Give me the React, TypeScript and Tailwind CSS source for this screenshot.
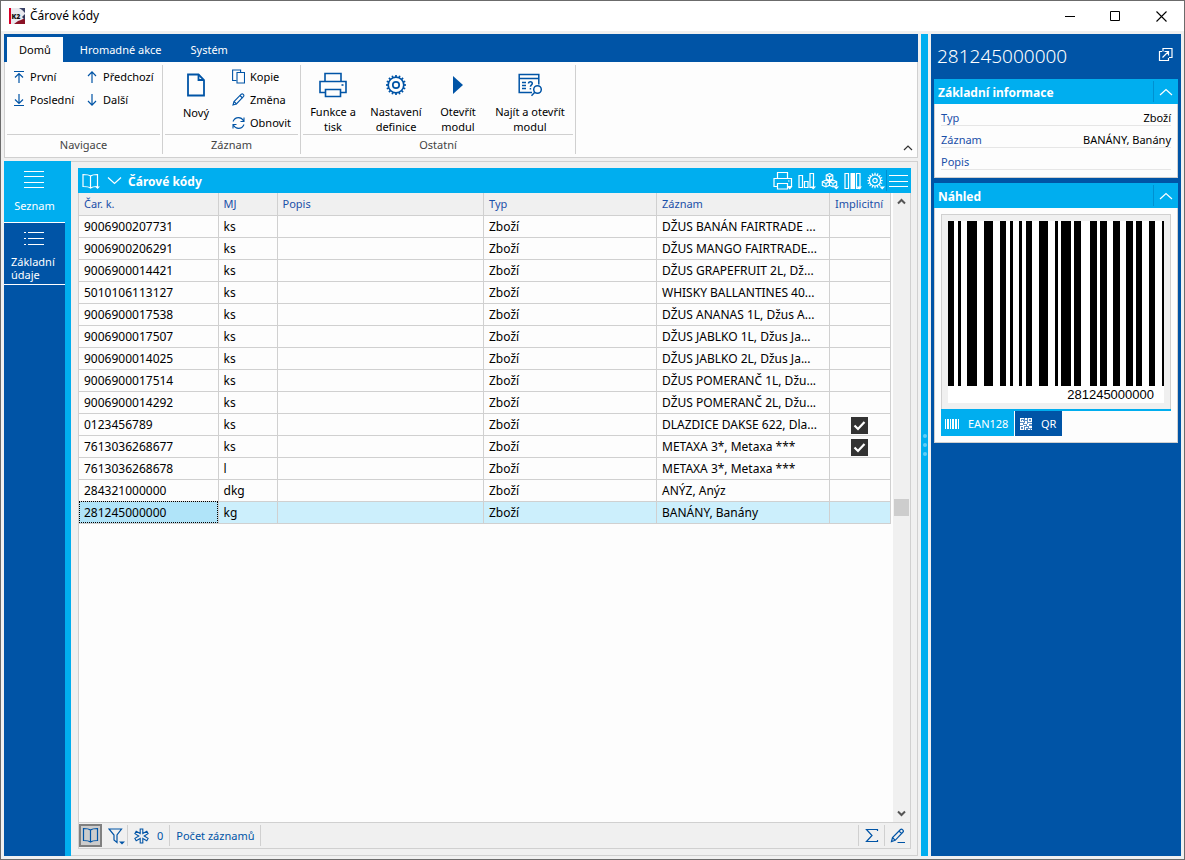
import React from "react";

const rows = [
	{ code: "9006900207731", unit: "ks", record: "DŽUS BANÁN FAIRTRADE ...", implicit: false },
	{ code: "9006900206291", unit: "ks", record: "DŽUS MANGO FAIRTRADE...", implicit: false },
	{ code: "9006900014421", unit: "ks", record: "DŽUS GRAPEFRUIT 2L, Dž...", implicit: false },
	{ code: "5010106113127", unit: "ks", record: "WHISKY BALLANTINES 40...", implicit: false },
	{ code: "9006900017538", unit: "ks", record: "DŽUS ANANAS 1L, Džus A...", implicit: false },
	{ code: "9006900017507", unit: "ks", record: "DŽUS JABLKO 1L, Džus Ja...", implicit: false },
	{ code: "9006900014025", unit: "ks", record: "DŽUS JABLKO 2L, Džus Ja...", implicit: false },
	{ code: "9006900017514", unit: "ks", record: "DŽUS POMERANČ 1L, Džu...", implicit: false },
	{ code: "9006900014292", unit: "ks", record: "DŽUS POMERANČ 2L, Džu...", implicit: false },
	{ code: "0123456789", unit: "ks", record: "DLAZDICE DAKSE 622, Dla...", implicit: true },
	{ code: "7613036268677", unit: "ks", record: "METAXA 3*, Metaxa ***", implicit: true },
	{ code: "7613036268678", unit: "l", record: "METAXA 3*, Metaxa ***", implicit: false },
	{ code: "284321000000", unit: "dkg", record: "ANÝZ, Anýz", implicit: false },
	{ code: "281245000000", unit: "kg", record: "BANÁNY, Banány", implicit: false },
];

const columns = ["Čar. k.", "MJ", "Popis", "Typ", "Záznam", "Implicitní"];

// [x, width] of every black bar
const bars = [
	[0, 6], [10, 3], [19, 10], [36, 9], [52, 6], [62, 3], [71, 3], [78, 6], [91, 9], [107, 3],
	[113, 10], [126, 7], [142, 7], [152, 7], [165, 7], [178, 7], [188, 6], [201, 6], [214, 2],
];

type IconProps = {
	w: number;
	h: number;
	className?: string;
	sw?: number;
	children: React.ReactNode;
};

function Icon({ w, h, className = "", sw = 1.2, children }: IconProps) {
	return (
		<svg
			width={w}
			height={h}
			viewBox={`0 0 ${w} ${h}`}
			fill="none"
			stroke="currentColor"
			strokeWidth={sw}
			className={`shrink-0 ${className}`}
			aria-hidden="true"
		>
			{children}
		</svg>
	);
}

function GearShape({ cx, cy, r, inner }: { cx: number; cy: number; r: number; inner: number }) {
	return (
		<>
			<circle cx={cx} cy={cy} r={r} />
			<circle cx={cx} cy={cy} r={inner} />
			{Array.from({ length: 16 }, (_, i) => {
				const a = (i * Math.PI) / 8;
				return (
					<line
						key={i}
						x1={cx + Math.cos(a) * r}
						y1={cy + Math.sin(a) * r}
						x2={cx + Math.cos(a) * (r + 2.2)}
						y2={cy + Math.sin(a) * (r + 2.2)}
					/>
				);
			})}
		</>
	);
}

function SmallButton({ label, icon }: { label: string; icon: React.ReactNode }) {
	return (
		<button type="button" className="flex h-[23px] items-center gap-[5px] text-left">
			{icon}
			<span className="pt-[2px]">{label}</span>
		</button>
	);
}

function BigButton({ icon, lines, className }: { icon: React.ReactNode; lines: string[]; className: string }) {
	return (
		<button type="button" className={`flex shrink-0 flex-col items-center leading-[15px] whitespace-nowrap ${className}`}>
			<span className="flex h-10 items-center text-[#0054a6]">{icon}</span>
			{lines.map((line) => (
				<span key={line}>{line}</span>
			))}
		</button>
	);
}

function RibbonGroup({ title, children }: { title: string; children: React.ReactNode }) {
	return (
		<div className="my-[3px] flex flex-col border-r border-[#d0d0d0] px-[2px]">
			<div className="flex h-[70px] border-b border-[#d0d0d0]">{children}</div>
			<p className="flex flex-1 items-center justify-center pt-[2px] text-[#444444]">{title}</p>
		</div>
	);
}

function Ribbon() {
	return (
		<div>
			<nav className="flex h-7 items-end gap-[5px] bg-[#0054a6] pl-[3px] text-white">
				<button type="button" className="h-[25px] bg-[#fdfdfd] px-3 pt-[2px] text-black">Domů</button>
				<button type="button" className="h-[25px] px-3 pt-[2px]">Hromadné akce</button>
				<button type="button" className="h-[25px] px-3 pt-[2px]">Systém</button>
			</nav>
			<div className="flex h-24 items-stretch border border-t-0 border-[#d0d0d0] bg-[#fdfdfd]">
				<RibbonGroup title="Navigace">
					<div className="flex w-[153px] pl-[6px]">
						<div className="w-[73px]">
							<SmallButton
								label="První"
								icon={
									<Icon w={12} h={14} className="text-[#0054a6]">
										<path d="M1 1.5h10M6 13V4M2 7.5l4-4 4 4" />
									</Icon>
								}
							/>
							<SmallButton
								label="Poslední"
								icon={
									<Icon w={12} h={14} className="text-[#0054a6]">
										<path d="M1 12.5h10M6 1v9M2 6.5l4 4 4-4" />
									</Icon>
								}
							/>
						</div>
						<div>
							<SmallButton
								label="Předchozí"
								icon={
									<Icon w={12} h={14} className="text-[#0054a6]">
										<path d="M6 13V2M2 6l4-4.2L10 6" />
									</Icon>
								}
							/>
							<SmallButton
								label="Další"
								icon={
									<Icon w={12} h={14} className="text-[#0054a6]">
										<path d="M6 1v11M2 8l4 4.2L10 8" />
									</Icon>
								}
							/>
						</div>
					</div>
				</RibbonGroup>
				<RibbonGroup title="Záznam">
					<div className="flex w-[133px] gap-[5px]">
						<BigButton
							className="w-[62px]"
							lines={["Nový"]}
							icon={
								<Icon w={18} h={24} sw={1.8}>
									<path d="M1 1.5h10.5L17 7v15.5H1z" />
									<path d="M11.5 1.5V7H17" />
								</Icon>
							}
						/>
						<div>
							<SmallButton
								label="Kopie"
								icon={
									<Icon w={13} h={15} sw={1.1} className="text-[#0054a6]">
										<path d="M5 3.5h7.5v10.5H5z" />
										<path d="M4.500 11.500H.6V1h8v2.500" />
									</Icon>
								}
							/>
							<SmallButton
								label="Změna"
								icon={
									<Icon w={13} h={13} sw={1.1} className="text-[#0054a6]">
										<path d="M1 12l1-3.500L9.300 1.200q1-.8 2 .2t.3 2L4.400 11z" />
										<path d="M8 2.500l2.500 2.500M2 8.500L4.500 11" />
									</Icon>
								}
							/>
							<SmallButton
								label="Obnovit"
								icon={
									<Icon w={13} h={14} sw={1.1} className="text-[#0054a6]">
										<path d="M1 5.500C2 3 4 1.600 6.500 1.600S10.500 3 11.500 4.800M12 1.500v4H8.500" />
										<path d="M12 8.500c-1 2.500-3 3.900-5.500 3.900S2.500 11 1.500 9.200M1 12.500v-4h3.500" />
									</Icon>
								}
							/>
						</div>
					</div>
				</RibbonGroup>
				<RibbonGroup title="Ostatní">
					<div className="flex w-[270px]">
						<BigButton
							className="w-[60px]"
							lines={["Funkce a", "tisk"]}
							icon={
								<Icon w={28} h={26} sw={1.6}>
									<path d="M6 9.500V1.500h16v8M6 20.500H1V9.500h26v11h-5" />
									<path d="M6.500 17.500h15v7h-15z" />
									<path d="M22.500 13h2" />
								</Icon>
							}
						/>
						<BigButton
							className="w-[66px]"
							lines={["Nastavení", "definice"]}
							icon={
								<Icon w={22} h={22} sw={1.7}>
									<GearShape cx={11} cy={11} r={7.8} inner={3.2} />
								</Icon>
							}
						/>
						<BigButton
							className="w-[58px]"
							lines={["Otevřít", "modul"]}
							icon={
								<Icon w={12} h={20} sw={0}>
									<path d="M1 1l10 9-10 9z" fill="currentColor" />
								</Icon>
							}
						/>
						<BigButton
							className="w-[86px]"
							lines={["Najít a otevřít", "modul"]}
							icon={
								<Icon w={25} h={24} sw={1.5}>
									<path d="M14 19.500H1.200V1.500h19.600v10M1 5.500h20" />
									<path d="M4 9.500h4M4 12.500h4M4 15.500h4" />
									<path d="M10.500 10.500q0-1.800 1.900-1.800t1.900 1.800c0 1.300-1.900 1.400-1.900 3.200M12.400 15v1.500" />
									<circle cx="19.500" cy="16.500" r="3.800" />
									<path d="M16.800 19.300L13.500 22.800" />
								</Icon>
							}
						/>
					</div>
				</RibbonGroup>
				<button type="button" aria-label="Sbalit pás karet" className="mt-auto mr-1 mb-1 ml-auto text-[#333333]">
					<Icon w={10} h={10}>
						<path d="M1 7l4-4 4 4" />
					</Icon>
				</button>
			</div>
		</div>
	);
}

function Sidebar() {
	return (
		<aside className="flex w-[67px] shrink-0 flex-col border-r-[6px] border-[#00aeef] bg-[#0054a6] text-white">
			<button type="button" className="flex h-[62px] flex-col items-center border-b border-white bg-[#00aeef] pt-[10px]">
				<Icon w={21} h={18} sw={1}>
					<path d="M0 .5h20M0 5.500h20M0 11.500h20M0 16.500h20" />
				</Icon>
				<span className="mt-2 leading-[18px]">Seznam</span>
			</button>
			<button type="button" className="flex h-[62px] flex-col items-center border-b border-white pt-2">
				<Icon w={21} h={15} sw={1}>
					<path d="M0 1.500h2M4 1.500h16M0 7.500h2M4 7.500h16M0 13.500h2M4 13.500h16" />
				</Icon>
				<span className="mt-[9px] w-[47px] text-left leading-[13px]">Základní údaje</span>
			</button>
		</aside>
	);
}

function BookIcon() {
	return (
		<Icon w={18} h={17}>
			<path d="M8.500 3Q6.500 1.500 1.500 1.500v12q5 0 7 1.500 2-1.500 7-1.500v-12q-5 0-7 1.500zM8.500 3v12" />
		</Icon>
	);
}

function GridHeader() {
	return (
		<header className="flex h-[25px] shrink-0 items-center bg-[#00aeef] pl-1 text-white">
			<button type="button" aria-label="Kniha">
				<Icon w={19} h={18}>
					<path d="M8.500 4Q6.500 2.500 1 2.500v12q5.500 0 7.500 1.500 2-1.500 7-1.500v-12q-5 0-7 1.500zM8.500 4v12" />
					<path d="M13 14.500h5L15.500 17z" fill="currentColor" stroke="none" />
				</Icon>
			</button>
			<button type="button" aria-label="Rozbalit" className="mx-[6px]">
				<Icon w={15} h={10}>
					<path d="M1 1.500l6.500 6 6.500-6" />
				</Icon>
			</button>
			<h1 className="pt-[2px] text-[12px] font-bold">Čárové kódy</h1>
			<div className="ml-auto flex h-full items-center gap-[5px]">
				<button type="button" aria-label="Tisk">
					<Icon w={20} h={20}>
						<path d="M4.500 7.500v-6h10v6M4.500 15.500H1v-8h17.500v8H15M4.500 12.500h10v5.500h-10zM15 10h1.500" />
						<path d="M14 15.500h5.500L16.800 18.500z" fill="currentColor" stroke="none" />
					</Icon>
				</button>
				<button type="button" aria-label="Graf">
					<Icon w={18} h={20}>
						<path d="M1 4.500h3.500v12H1zM6.500 10.500H10v6H6.500zM12 2.500h3.500v14H12z" />
						<path d="M12.500 15.500h5.500L15.200 18.500z" fill="currentColor" stroke="none" />
					</Icon>
				</button>
				<button type="button" aria-label="Analýza">
					<Icon w={18} h={20} sw={1.1}>
						<path d="M8.500 2.500l3.300 1.700v3.600L8.500 9.500 5.200 7.800V4.200zM5 9l3.400 1.700v3.600L5 16l-3.700-1.700v-3.600zM12 9l3.700 1.700v3.600L12 16l-3.500-1.700v-3.600z" />
						<path d="M5.200 4.200l3.300 1.600 3.300-1.600M8.500 6v3.500M1.300 10.700L5 12.500l3.500-1.800L12 12.500l3.700-1.800M5 12.500V16M12 12.500V16" />
						<path d="M12.500 15.500h5.500L15.200 18.500z" fill="currentColor" stroke="none" />
					</Icon>
				</button>
				<button type="button" aria-label="Sloupce">
					<Icon w={18} h={20}>
						<path d="M1 2.500h3.500v15H1zM12.500 2.500H16v15h-3.500z" />
						<path d="M6.500 2h4.500v16H6.500z" fill="currentColor" stroke="none" />
						<path d="M12.500 15.500h5.500L15.200 18.500z" fill="currentColor" stroke="none" />
					</Icon>
				</button>
				<button type="button" aria-label="Nastavení">
					<Icon w={18} h={20}>
						<GearShape cx={8} cy={9.5} r={5.5} inner={2.2} />
						<path d="M12.500 15.500h5.500L15.200 18.500z" fill="currentColor" stroke="none" />
					</Icon>
				</button>
				<button type="button" aria-label="Nabídka" className="-ml-1 flex h-[21px] items-center border-l border-[#0090d0] pr-[3px] pl-[2px]">
					<Icon w={19} h={14} sw={1}>
						<path d="M0 1.500h19M0 7.500h19M0 12.500h19" />
					</Icon>
				</button>
			</div>
		</header>
	);
}

function CodesTable() {
	return (
		<table className="w-full table-fixed border-collapse text-[12px]">
			<colgroup>
				<col className="w-[139px]" />
				<col className="w-[59px]" />
				<col />
				<col className="w-[173px]" />
				<col className="w-[173px]" />
				<col className="w-[61px]" />
			</colgroup>
			<thead>
				<tr className="h-[22px] bg-[#f0f0f0] text-[11px] text-[#1a4fa8]">
					{columns.map((column) => (
						<th key={column} className="border-r border-b border-[#d0d0d0] p-0 pl-[5px] text-left font-normal whitespace-nowrap">
							{column}
						</th>
					))}
				</tr>
			</thead>
			<tbody>
				{rows.map((row) => {
					const selected = row.code === "281245000000";
					return (
						<tr
							key={row.code}
							className={
								selected
									? "h-[22px] bg-[#cceffc] *:border-r *:border-b *:border-[#d0d0d0] *:p-0 *:pt-[2px] *:pl-[5px]"
									: "h-[22px] *:border-r *:border-b *:border-[#d0d0d0] *:p-0 *:pt-[2px] *:pl-[5px]"
							}
						>
							<td className={selected ? "bg-[#b0e4f9] outline outline-dotted -outline-offset-1 outline-black" : ""}>{row.code}</td>
							<td>{row.unit}</td>
							<td></td>
							<td>Zboží</td>
							<td className="whitespace-nowrap">{row.record}</td>
							<td>
								{row.implicit && (
									<span className="mr-[6px] grid place-items-center text-white">
										<input
											type="checkbox"
											defaultChecked
											aria-label={`Implicitní ${row.code}`}
											className="col-start-1 row-start-1 size-[17px] appearance-none bg-[#333333]"
										/>
										<Icon w={13} h={13} sw={2.2} className="pointer-events-none col-start-1 row-start-1">
											<path d="M1.500 6.500l3.500 3.500 6.500-7" />
										</Icon>
									</span>
								)}
							</td>
						</tr>
					);
				})}
			</tbody>
		</table>
	);
}

function GridFooter() {
	return (
		<footer className="flex h-[26px] shrink-0 items-center border-t border-[#d0d0d0] text-[#0054a6]">
			<button type="button" aria-label="Kniha" className="flex h-[23px] w-[23px] items-center justify-center border-2 border-[#808080] bg-[#cccccc]">
				<BookIcon />
			</button>
			<button type="button" aria-label="Filtr" className="flex h-[21px] items-center border-r border-[#d0d0d0] pr-[2px] pl-[6px]">
				<Icon w={17} h={19}>
					<path d="M1 3h12.500L9 9v7.500L6 14V9z" />
					<path d="M11 15.500h6L14 18.500z" fill="currentColor" stroke="none" />
				</Icon>
			</button>
			<button type="button" className="flex h-[21px] items-center gap-2 border-r border-[#d0d0d0] px-[6px]">
				<Icon w={15} h={16} sw={1.1}>
					<path d="M6.200 1h2.600v4.600l4-2.300 1.300 2.300L10.200 8l3.900 2.400-1.300 2.300-4-2.300V15H6.200v-4.600l-4 2.300L.9 10.400 4.800 8 .9 5.600l1.300-2.300 4 2.300z" />
				</Icon>
				<span className="pt-px">0</span>
			</button>
			<button type="button" className="h-[21px] border-r border-[#d0d0d0] px-[6px] pt-px">Počet záznamů</button>
			<button type="button" aria-label="Součet" className="ml-auto flex h-[21px] w-[26px] items-center justify-center border-l border-[#d0d0d0]">
				<Icon w={14} h={15}>
					<path d="M12.500 3V1.500H1.500L7 7.500l-5.500 6h11V12" />
				</Icon>
			</button>
			<button type="button" aria-label="Upravit" className="flex h-[21px] w-[26px] items-center justify-center border-l border-[#d0d0d0]">
				<Icon w={16} h={16}>
					<path d="M1.500 13.500l1-4L10.500 1.500q1-.8 2.200.4t.3 2.100L5.200 12.300zM9 3l2.800 2.800M2.500 9.500l2.700 2.800M7.500 14.500H15" />
				</Icon>
			</button>
		</footer>
	);
}

function DataGrid() {
	return (
		<section className="flex min-w-0 flex-1 flex-col border border-l-0 border-[#d0d0d0] p-[6px] pl-[7px]">
			<div className="flex flex-1 flex-col">
				<GridHeader />
				<div className="flex flex-1 flex-col border border-t-0 border-[#d0d0d0]">
					<div className="flex flex-1 bg-[#fdfdfd]">
						<div className="min-w-0 flex-1">
							<CodesTable />
						</div>
						<div className="ml-[2px] flex w-[17px] flex-col items-center justify-between bg-[#f0f0f0] text-[#555555]">
							<button type="button" aria-label="Nahoru" className="flex h-[17px] items-center">
								<Icon w={9} h={9} sw={2}>
									<path d="M1 6.500L4.500 3 8 6.500" />
								</Icon>
							</button>
							<div className="h-[17px] w-[15px] bg-[#cdcdcd]" />
							<button type="button" aria-label="Dolů" className="flex h-[17px] items-center">
								<Icon w={9} h={9} sw={2}>
									<path d="M1 2.500L4.500 6 8 2.500" />
								</Icon>
							</button>
						</div>
					</div>
					<GridFooter />
				</div>
			</div>
		</section>
	);
}

function PanelHeader({ title }: { title: string }) {
	return (
		<header className="flex h-[25px] items-center bg-[#00aeef] pl-1 text-white">
			<h2 className="pt-[2px] text-[12px] font-bold">{title}</h2>
			<button type="button" aria-label={`Sbalit ${title}`} className="ml-auto flex h-[21px] w-[25px] items-center justify-center border-l border-[#0090d0]">
				<Icon w={14} h={8}>
					<path d="M1 7l6-5.500L13 7" />
				</Icon>
			</button>
		</header>
	);
}

function InfoRow({ label, value }: { label: string; value: string }) {
	return (
		<div className="flex h-[22px] items-end justify-between border-b border-[#e6e6e6] leading-[15px]">
			<dt className="text-[#1a4fa8]">{label}</dt>
			<dd>{value}</dd>
		</div>
	);
}

function Preview() {
	return (
		<aside className="w-[250px] shrink-0 bg-[#0054a6] px-[3px]">
			<div className="flex h-[45px] items-center justify-between pr-[5px] pl-[3px] text-white">
				<p className="text-[19px] font-light">281245000000</p>
				<button type="button" aria-label="Otevřít v novém okně" className="mb-1">
					<Icon w={15} h={15}>
						<path d="M5 4.500V1.500h9v9h-3M4 4.500H1.500v9h9V11M4.500 10.500l6-6M6.500 4.500h4v4" />
					</Icon>
				</button>
			</div>
			<section>
				<PanelHeader title="Základní informace" />
				<dl className="border border-t-0 border-[#d0d0d0] bg-[#fdfdfd] px-[6px] pb-[7px]">
					<InfoRow label="Typ" value="Zboží" />
					<InfoRow label="Záznam" value="BANÁNY, Banány" />
					<InfoRow label="Popis" value="" />
				</dl>
			</section>
			<section className="mt-[5px]">
				<PanelHeader title="Náhled" />
				<div className="border border-t-0 border-[#d0d0d0] bg-[#fdfdfd] p-[6px]">
					<div className="border border-b-0 border-[#d0d0d0] bg-[#f0f0f0] p-[6px]">
						<div className="bg-white">
							<svg viewBox="0 0 216 165" className="block w-full" shapeRendering="crispEdges" role="img" aria-label="Čárový kód">
								{bars.map(([x, width]) => (
									<rect key={x} x={x} y="0" width={width} height="165" />
								))}
							</svg>
							<p className="h-[17px] pr-[10px] text-right font-['Liberation_Sans',Arial,sans-serif] text-[13px] leading-[17px]">281245000000</p>
						</div>
					</div>
					<div className="flex gap-px border-t-2 border-[#00aeef] text-white">
						<button type="button" className="flex h-[25px] w-[73px] items-center gap-[9px] bg-[#00aeef] pl-1">
							<Icon w={14} h={10} sw={0}>
								<path d="M0 0h1v10H0zM2 0h2v10H2zM5 0h1v10H5zM7 0h2v10H7zM10 0h2v10h-2zM13 0h1v10h-1z" fill="currentColor" />
							</Icon>
							<span className="pt-[2px]">EAN128</span>
						</button>
						<button type="button" className="flex h-[25px] w-[47px] items-center gap-[9px] bg-[#0054a6] pl-[5px]">
							<Icon w={12} h={12} sw={0}>
								<path d="M0 0h12v12H0z" fill="currentColor" opacity="0.35" />
								<path
									d="M0 0h4v1H1v2h3v1H0zM2 2h1v1H2zM5 0h2v2H5zM8 0h4v4H8V3h3V1H9v2H8zM5 3h2v3H4V5h1zM0 5h3v2H0zM8 5h4v1H9v2H7V6h1zM3 7h3v1H3zM0 8h4v4H0v-1h3V9H1v2H0zM5 9h3v1H6v2H5zM9 8h3v2H9zM8 11h2v1H8zM11 11h1v1h-1z"
									fill="currentColor"
								/>
							</Icon>
							<span className="pt-[2px]">QR</span>
						</button>
					</div>
				</div>
			</section>
		</aside>
	);
}

function TitleBar() {
	return (
		<div className="flex h-[30px] shrink-0 items-center bg-white pl-2">
			<svg width="16" height="16" viewBox="0 0 16 16" aria-hidden="true">
				<path d="M0 0h16v16H0z" fill="#e9e9ee" />
				<path d="M0 0h2v16H0z" fill="#d80027" />
				<path d="M10 0h6v5q-2-3-6-5z" fill="#3b4267" />
				<path d="M5 16l4-3 3-1 4-2v6z" fill="#8b1225" />
				<path d="M13 9l3-3v6z" fill="#33375a" />
				<text x="2.500" y="10.500" fontSize="7" fontWeight="800" fontFamily="Open Sans, sans-serif" fill="#111111">K2</text>
			</svg>
			<p className="ml-[5px] text-[12px]">Čárové kódy</p>
			<div className="ml-auto flex">
				<button type="button" aria-label="Minimalizovat" className="flex w-[45px] justify-center">
					<Icon w={11} h={11} sw={1}><path d="M0 5.500h10" /></Icon>
				</button>
				<button type="button" aria-label="Maximalizovat" className="flex w-[45px] justify-center">
					<Icon w={11} h={11} sw={1}><path d="M.5.5h9v9h-9z" /></Icon>
				</button>
				<button type="button" aria-label="Zavřít" className="flex w-[46px] justify-center">
					<Icon w={11} h={11} sw={1.1}><path d="M.5.5l10 10M10.500.5l-10 10" /></Icon>
				</button>
			</div>
		</div>
	);
}

function App() {
	return (
		<div className="flex h-screen min-h-[600px] flex-col border border-[#6b6b6b] bg-[#f0f0f0] font-['Noto_Sans','Open_Sans',sans-serif] text-[11px] text-black">
			<TitleBar />
			<div className="flex min-h-0 flex-1 gap-[3px] p-[3px]">
				<main className="flex min-w-0 flex-1 flex-col gap-[3px]">
					<Ribbon />
					<div className="flex min-h-0 flex-1">
						<Sidebar />
						<DataGrid />
					</div>
				</main>
				<div className="flex w-[7px] shrink-0 flex-col items-center justify-center gap-[5px] bg-[#00aeef]">
					<span className="size-1 rounded-full bg-[#5fcdf7]" />
					<span className="size-1 rounded-full bg-[#5fcdf7]" />
					<span className="size-1 rounded-full bg-[#5fcdf7]" />
				</div>
				<Preview />
			</div>
		</div>
	);
}

export default App;
